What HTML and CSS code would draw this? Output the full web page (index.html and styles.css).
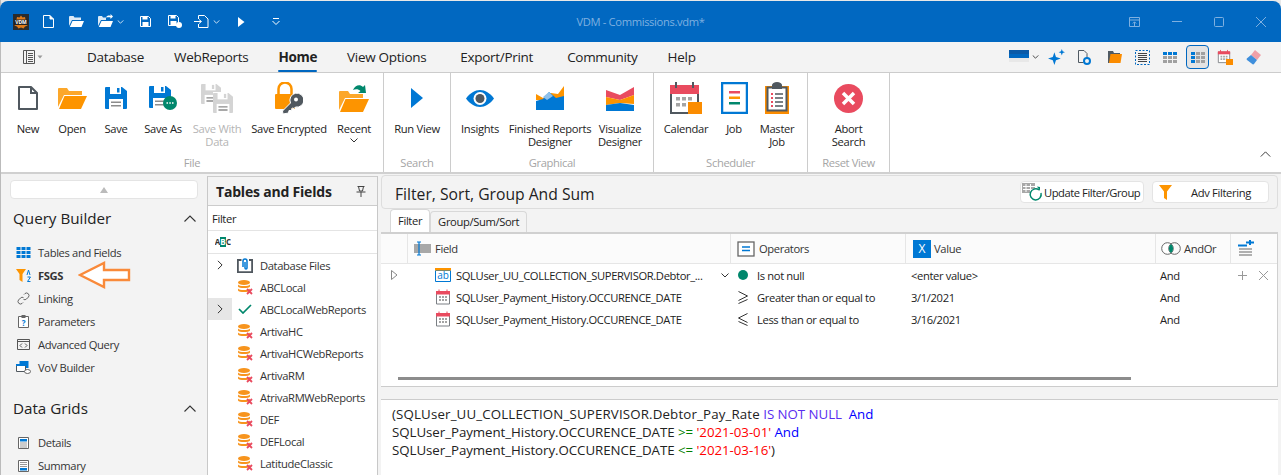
FILE: index.html
```html
<!DOCTYPE html>
<html lang="en">
<head>
  <meta charset="UTF-8">
  <meta name="viewport" content="width=device-width, initial-scale=1.0">
  <title>VDM - Commissions.vdm*</title>
  <link rel="stylesheet" href="styles.css">
</head>
<body>

<svg class="defs">
  <symbol id="db-x" viewBox="0 0 16 16">
    <ellipse cx="7" cy="3.5" rx="6" ry="2.5" fill="#f7941d"/>
    <path d="M1 5.5c1 2 11 2 12 0v2c-1 2-11 2-12 0zM1 9.5c1 2 11 2 12 0v2c-1 2-11 2-12 0z" fill="#f7941d"/>
    <path d="M10 10l5 5M15 10l-5 5" stroke="#e94b5f" stroke-width="1.8"/>
  </symbol>
  <symbol id="cal-small" viewBox="0 0 16 16">
    <path d="M1.5 3h13v12h-13z" fill="#fff" stroke="#7b7f84"/>
    <path d="M1 2h14v3.500H1z" fill="#e94b5f"/>
    <path d="M4 .5v3M12 .5v3" stroke="#e94b5f"/>
    <path d="M4 7h2v2H4zM7 7h2v2H7zM10 7h2v2h-2zM4 10h2v2H4zM7 10h2v2H7zM10 10h2v2h-2z" fill="#a4a4a4"/>
  </symbol>
  <symbol id="floppy" viewBox="0 0 22 22">
    <path d="M1 0h16l5 4v17a1 1 0 0 1-1 1H1a1 1 0 0 1-1-1V1a1 1 0 0 1 1-1z"/>
    <path d="M5 0h11v7H5z" fill="#fff"/>
    <path d="M12 1h2.500v4.500H12z"/>
    <path d="M4 12h14v10H4z" fill="#fff"/>
    <path d="M6 14.500h10V16H6zM6 18h10v1.500H6z" fill="#8c8c8c"/>
  </symbol>
  <symbol id="chev" viewBox="0 0 8 5">
    <path d="M.5.500L4 4 7.500.5" fill="none" stroke="currentColor"/>
  </symbol>
  <symbol id="chev-up" viewBox="0 0 12 7">
    <path d="M.5 6.500L6 1l5.500 5.500" fill="none" stroke="currentColor" stroke-width="1.100"/>
  </symbol>
  <symbol id="chev-right" viewBox="0 0 7 12">
    <path d="M1 1l5 5-5 5" fill="none" stroke="currentColor" stroke-width="1.200"/>
  </symbol>
  <symbol id="grid-tiles" viewBox="0 0 14 11">
    <path d="M0 0h4v3H0zM5 0h4v3H5zM10 0h4v3h-4zM0 4h4v3H0zM5 4h4v3H5zM10 4h4v3h-4zM0 8h4v3H0zM5 8h4v3H5zM10 8h4v3h-4z"/>
  </symbol>
</svg>

<div class="window">
  <header class="titlebar">
    <div class="qat">
      <svg class="logo" width="16" height="16" viewBox="0 0 16 16"><rect width="16" height="16" fill="#2b2b2b"/><path d="M8 1.500l1.500 2 2.500-.5.500 2.500 2 1.500-1 2 1 2.500-2.500 1-1.500 2-2.500-1-2.500 1-1.500-2-2.500-1 1-2.500-1-2 2-1.500.5-2.500 2.500.5z" fill="#e07b1a"/><rect x="1" y="5.500" width="14" height="5.500" fill="#222"/><text x="8" y="10.300" class="logo-text">VDM</text></svg>
      <svg class="q-new" width="11" height="13" viewBox="0 0 11 13"><path d="M.5.500h6.500l3.500 3.500v8.500H.5z" fill="none" stroke="#fff"/><path d="M7 .5V4h3.500" fill="#fff" stroke="#fff"/></svg>
      <svg class="q-open" width="15" height="11" viewBox="0 0 15 11"><path d="M0 1a1 1 0 0 1 1-1h3.500l1 1.500H12V4H3L0 10z" fill="#dbe9f6"/><path d="M3.500 5H15l-2.500 6H.8z" fill="#fff"/></svg>
      <svg class="q-open2" width="15" height="13" viewBox="0 0 15 13"><path d="M0 3a1 1 0 0 1 1-1h3l1 1.500h3V6H3l-3 6z" fill="#dbe9f6"/><path d="M3.500 7H15l-2.500 6H.8z" fill="#fff"/><path d="M8 3.500C9 1.500 11 1 12.500 2V0L15 2.500 12.500 5V3.500c-1.500-.5-3 0-4.500 0z" fill="#fff"/></svg>
      <svg class="q-chev" width="7" height="4"><use href="#chev"/></svg>
      <svg class="q-save" width="11" height="11" viewBox="0 0 11 11"><path d="M.5.500h8l2 2v8h-10z" fill="none" stroke="#fff"/><path d="M2.500 0h5v3.500h-5zM2.500 6h6v5h-6z" fill="#fff"/></svg>
      <svg class="q-saveas" width="14" height="13" viewBox="0 0 14 13"><path d="M.5.500h8l2 2v8h-10z" fill="none" stroke="#fff"/><path d="M2.500 0h5v3.500h-5zM2.500 6h6v5h-6z" fill="#fff"/><circle cx="11" cy="10" r="3" fill="#fff"/></svg>
      <svg class="q-import" width="15" height="13" viewBox="0 0 15 13"><path d="M4.500 4V.5h6L14 4v8.500H4.500V9" fill="none" stroke="#fff"/><path d="M0 6.500h7M5 4.500l2.500 2-2.500 2" fill="none" stroke="#fff"/></svg>
      <svg class="q-chev" width="7" height="4"><use href="#chev"/></svg>
      <svg class="q-run" width="7" height="10" viewBox="0 0 7 10"><path d="M0 0l6.500 5L0 10z" fill="#fff"/></svg>
      <svg class="q-more" width="8" height="7" viewBox="0 0 8 7"><path d="M1 .5h6M.5 3L4 6.500 7.500 3" fill="none" stroke="#fff"/></svg>
    </div>
    <div class="doc-title">VDM - Commissions.vdm*</div>
    <div class="win-btns">
      <svg width="11" height="10" viewBox="0 0 11 10"><path d="M.5.500h10v9H.5zM.5 3h10M5.500 9V5M3.800 6.500l1.700-1.700 1.700 1.700" fill="none" stroke="#7fb0e0"/></svg>
      <svg width="10" height="1" viewBox="0 0 10 1"><path d="M0 .5h10" stroke="#7fb0e0"/></svg>
      <svg width="10" height="10" viewBox="0 0 10 10"><rect x=".5" y=".5" width="9" height="9" rx="1" fill="none" stroke="#7fb0e0"/></svg>
      <svg width="10" height="10" viewBox="0 0 10 10"><path d="M0 0l10 10M10 0L0 10" stroke="#7fb0e0"/></svg>
    </div>
  </header>

  <nav class="tabbar">
    <svg class="tab-menu" width="20" height="14" viewBox="0 0 20 14"><path d="M.5.500h11v13H.5zM3.500.5v13M5 3.500h5M5 5.500h5M5 7.500h5M5 9.500h5M5 11.500h5" fill="none" stroke="#555"/><path d="M14.500 5.500h5L17 8.500z" fill="#999"/></svg>
    <div class="tabs">
      <span>Database</span>
      <span>WebReports</span>
      <span class="tab-on">Home</span>
      <span>View Options</span>
      <span class="tab-export">Export/Print</span>
      <span class="tab-comm">Community</span>
      <span>Help</span>
    </div>
    <div class="tab-tools">
      <span class="swatch"><i></i><i></i><i></i></span>
      <svg class="swatch-chev" width="7" height="4"><use href="#chev"/></svg>
      <svg class="t-spark" width="17" height="17" viewBox="0 0 16 16"><path d="M6 3l1.500 4.500L12 9l-4.500 1.500L6 15l-1.500-4.500L0 9l4.500-1.500zM13 0l.8 2.200L16 3l-2.200.8L13 6l-.8-2.200L10 3l2.200-.8z" fill="#0078d4"/></svg>
      <svg class="t-doc" width="13" height="15" viewBox="0 0 13 15"><path d="M.5.500h5.500l3 3v5M.5.500v12h5" fill="none" stroke="#505a63"/><circle cx="9" cy="11" r="3" fill="none" stroke="#0078d4" stroke-width="2"/></svg>
      <svg width="14" height="12" viewBox="0 0 14 12"><path d="M0 0h5l1 2h6v3H3L1.500 12H0z" fill="#505a63"/><path d="M2.500 3H14l-1.500 9H1z" fill="#fb8c00"/></svg>
      <svg width="15" height="15" viewBox="0 0 15 15"><rect x=".5" y=".5" width="14" height="14" fill="none" stroke="#0067c0" stroke-dasharray="2 1.500"/><path d="M3 3.500h9M3 5.500h9M3 7.500h9M3 9.500h9M3 11.500h9" stroke="#444"/></svg>
      <svg width="14" height="11" viewBox="0 0 14 11"><path d="M0 0h4v3H0zM5 0h4v3H5zM10 0h4v3h-4z" fill="#0078d4"/><path d="M0 4h4v3H0zM5 4h4v3H5zM10 4h4v3h-4zM0 8h4v3H0zM5 8h4v3H5zM10 8h4v3h-4z" fill="#a0a0a0"/></svg>
      <span class="tool-on"><svg width="14" height="11" viewBox="0 0 14 11"><path d="M5 0h4v3H5zM10 0h4v3h-4zM5 4h4v3H5zM10 4h4v3h-4zM5 8h4v3H5zM10 8h4v3h-4z" fill="#a0a0a0"/><path d="M0 0h4v3H0zM0 4h4v3H0zM0 8h4v3H0z" fill="#0078d4"/></svg></span>
      <svg width="16" height="16" viewBox="0 0 16 16"><use href="#cal-small" width="14" height="15"/><rect x="9" y="10" width="7" height="6" fill="#fb8c00"/></svg>
      <svg width="15" height="15" viewBox="0 0 15 15"><path d="M9 0l6 5-4 5-6-5z" fill="#f0a0a8"/><path d="M5 5l6 5-3 4a1 1 0 0 1-1.400.2L1 10a1 1 0 0 1-.2-1.400z" fill="#3f8fdc"/></svg>
    </div>
  </nav>

  <section class="ribbon">
    <div class="rgroup">
      <div class="ritems g-file">
        <div class="rbtn">
          <div class="ricon"><svg width="20" height="24" viewBox="0 0 20 24"><path d="M1 1h12l6 6v16H1z" fill="#fff" stroke="#50585f" stroke-width="2" stroke-linejoin="round"/><path d="M13 1v6h6" fill="none" stroke="#50585f" stroke-width="2"/></svg></div>
          <span>New</span>
        </div>
        <div class="rbtn">
          <div class="ricon"><svg width="29" height="21" viewBox="0 0 29 21"><path d="M1 0h8l2 3h13v4H6L0 19V1a1 1 0 0 1 1-1z" fill="#fca72a"/><path d="M6.500 8H29l-6 13H1z" fill="#fd9400"/></svg></div>
          <span>Open</span>
        </div>
        <div class="rbtn">
          <div class="ricon"><svg class="blue" width="22" height="22"><use href="#floppy"/></svg></div>
          <span>Save</span>
        </div>
        <div class="rbtn">
          <div class="ricon"><svg width="28" height="24" viewBox="0 0 28 24"><use href="#floppy" class="blue" width="22" height="22"/><circle cx="21" cy="17" r="7" fill="#00876c"/><path d="M17.500 17h1.500M20.300 17h1.500M23 17h1.500" stroke="#fff" stroke-width="1.500"/></svg></div>
          <span>Save As</span>
        </div>
        <div class="rbtn rbtn-off">
          <div class="ricon"><svg width="32" height="29" viewBox="0 0 32 29"><use href="#floppy" class="grey" width="20" height="20"/><rect x="12" y="8" width="20" height="21" fill="#fff"/><use href="#floppy" class="grey" x="12" y="9" width="20" height="20"/></svg></div>
          <span>Save With<br>Data</span>
        </div>
        <div class="rbtn">
          <div class="ricon"><svg width="28" height="33" viewBox="0 0 28 33"><path d="M3.500 14V7a6.500 6.500 0 0 1 13 0v6" fill="none" stroke="#fd9400" stroke-width="2.500"/><rect y="12" width="20" height="15" rx="1" fill="#fd9400"/><path d="M8 32l-.5-3 8-8a7 7 0 1 1 5 4l-1.500 1.500-2-.5-.5 2.500-2.500 0-.5 2.500z" fill="#50585f" stroke="#fff"/><circle cx="21" cy="17.500" r="2" fill="#fff"/></svg></div>
          <span>Save Encrypted</span>
        </div>
        <div class="rbtn">
          <div class="ricon"><svg width="30" height="28" viewBox="0 0 30 28"><path d="M1 7h8l2 3h13v4H6L0 26V8a1 1 0 0 1 1-1z" fill="#fca72a"/><path d="M6.500 15H30l-6 13H1z" fill="#fd9400"/><path d="M14 6c2-5 7-6 10-3l2-2 1 8h-8l2.500-2c-2-2-5-2-7.500-1z" fill="#00876c"/></svg></div>
          <span>Recent<br><svg class="rchev" width="8" height="5"><use href="#chev"/></svg></span>
        </div>
      </div>
      <div class="rlabel">File</div>
    </div>

    <div class="rgroup">
      <div class="ritems g-search">
        <div class="rbtn">
          <div class="ricon"><svg width="12" height="20" viewBox="0 0 12 20"><path d="M0 0l12 10L0 20z" fill="#0078d4"/></svg></div>
          <span>Run View</span>
        </div>
      </div>
      <div class="rlabel">Search</div>
    </div>

    <div class="rgroup">
      <div class="ritems g-graph">
        <div class="rbtn">
          <div class="ricon"><svg width="28" height="17" viewBox="0 0 28 17"><path d="M0 8.500C4 3 9 0 14 0s10 3 14 8.500C24 14 19 17 14 17S4 14 0 8.500z" fill="#0078d4"/><circle cx="14" cy="8.500" r="6.500" fill="#fff"/><circle cx="14" cy="8.500" r="4.500" fill="#50585f"/></svg></div>
          <span>Insights</span>
        </div>
        <div class="rbtn">
          <div class="ricon"><svg width="28" height="24" viewBox="0 0 28 24"><path d="M0 8l7 4 8-5 7 1 6-8v14H0z" fill="#fd9400"/><path d="M0 15l7-2 6-7 7 6 8-2v14H0z" fill="#0078d4"/><path d="M7 11l6-5 4 4-6 4z" fill="#8ec0ea"/></svg></div>
          <span>Finished Reports<br>Designer</span>
        </div>
        <div class="rbtn">
          <div class="ricon"><svg width="28" height="26" viewBox="0 0 28 26"><path d="M0 5l14 5 14-8v8L14 15 0 12z" fill="#e94b5f"/><path d="M0 12l14 3 14-5v9l-14-1-14 2z" fill="#fd9400"/><path d="M0 20l14-2 14 2v6H0z" fill="#0078d4"/></svg></div>
          <span>Visualize<br>Designer</span>
        </div>
      </div>
      <div class="rlabel">Graphical</div>
    </div>

    <div class="rgroup">
      <div class="ritems g-sched">
        <div class="rbtn">
          <div class="ricon"><svg width="32" height="32" viewBox="0 0 32 32"><path d="M1 4h27v27H1z" fill="#fff" stroke="#50585f" stroke-width="2"/><path d="M0 3h29v9H0z" fill="#e94b5f"/><path d="M6 0v6M23 0v6" stroke="#50585f" stroke-width="2"/><path d="M6 15h4v3.500H6zM12 15h4v3.500h-4zM18 15h4v3.500h-4zM6 21h4v3.500H6zM12 21h4v3.500h-4z" fill="#a4a4a4"/><rect x="18" y="20" width="14" height="12" fill="#fb8c00"/></svg></div>
          <span>Calendar</span>
        </div>
        <div class="rbtn">
          <div class="ricon"><svg width="27" height="32" viewBox="0 0 27 32"><rect x="1" y="1" width="25" height="30" fill="#fff" stroke="#0078d4" stroke-width="2.500"/><path d="M8 9h11v2.500H8z" fill="#e94b5f"/><path d="M8 14.500h11V17H8z" fill="#fd9400"/><path d="M8 20h11v2.500H8z" fill="#00876c"/></svg></div>
          <span>Job</span>
        </div>
        <div class="rbtn">
          <div class="ricon"><svg width="24" height="32" viewBox="0 0 24 32"><path d="M0 4h24v28H0z" fill="#fb8c00"/><path d="M2.500 5.500h19v23h-19z" fill="#fff" stroke="#50585f" stroke-width="2"/><path d="M7 3a5 3 0 0 1 10 0v4H7z" fill="#50585f"/><path d="M6 11h2v2H6zM6 15h2v2H6zM6 19h2v2H6zM6 23h2v2H6z" fill="#e94b5f"/><path d="M10 12h8M10 16h8M10 20h8M10 24h8" stroke="#50585f" stroke-width="1.500"/></svg></div>
          <span>Master<br>Job</span>
        </div>
      </div>
      <div class="rlabel">Scheduler</div>
    </div>

    <div class="rgroup">
      <div class="ritems g-reset">
        <div class="rbtn">
          <div class="ricon"><svg width="29" height="29" viewBox="0 0 29 29"><circle cx="14.500" cy="14.500" r="14.500" fill="#e94b5f"/><path d="M9 9l11 11M20 9L9 20" stroke="#fff" stroke-width="3.500"/></svg></div>
          <span>Abort<br>Search</span>
        </div>
      </div>
      <div class="rlabel">Reset View</div>
    </div>

    <svg class="ribbon-collapse" width="11" height="6"><use href="#chev-up"/></svg>
  </section>

  <main class="main">
    <aside class="sidenav">
      <div class="nav-scroll"><i></i></div>
      <div class="nav-head"><span>Query Builder</span><svg width="12" height="7"><use href="#chev-up"/></svg></div>
      <ul class="nav-list">
        <li><svg class="blue" width="14" height="11"><use href="#grid-tiles"/></svg>Tables and Fields</li>
        <li class="nav-on"><svg width="15" height="13" viewBox="0 0 15 13"><path d="M0 0h10L6.500 5v8L3.500 11V5z" fill="#fd9400"/><path d="M11 6l1.500-5 1.500 5M11.500 8h3l-3 4.500h3" fill="none" stroke="#0078d4"/></svg>FSGS
          <svg class="arrow" width="53" height="28" viewBox="0 0 53 28"><path d="M2 14L26 2v7h25v10H26v7z" fill="#fff" stroke="#f98a3a" stroke-width="2.400"/></svg>
        </li>
        <li><svg width="13" height="13" viewBox="0 0 13 13"><path d="M7 2.500l1-1a2.500 2.500 0 0 1 3.500 3.500L9.500 7a2.500 2.500 0 0 1-3 .4M6 10.500l-1 1A2.500 2.500 0 0 1 1.500 8L3.500 6a2.500 2.500 0 0 1 3-.4" fill="none" stroke="#666"/></svg>Linking</li>
        <li><svg width="11" height="13" viewBox="0 0 11 13"><path d="M.5 1.500h10v11H.5z" fill="#fff" stroke="#666"/><path d="M3.500 0h4v3h-4z" fill="#666"/><text x="5.500" y="10.500" class="svg-q">?</text></svg>Parameters</li>
        <li><svg width="13" height="11" viewBox="0 0 13 11"><path d="M.5.500h12v10H.5zM.5 2.500h12" fill="none" stroke="#555"/><path d="M5 4.500L3 6.500l2 2M8 4.500l2 2-2 2" fill="none" stroke="#555"/></svg>Advanced Query</li>
        <li><svg width="15" height="13" viewBox="0 0 15 13"><path d="M3.500 0h9v7h-9z" fill="#0078d4"/><path d="M.5 3.500h9v7h-9z" fill="#fff" stroke="#50585f"/><path d="M0 3h10v2H0z" fill="#0078d4"/><ellipse cx="11.500" cy="10.500" rx="3" ry="2" fill="#fff" stroke="#666"/></svg>VoV Builder</li>
      </ul>
      <div class="nav-head nav-head2"><span>Data Grids</span><svg width="12" height="7"><use href="#chev-up"/></svg></div>
      <ul class="nav-list nav-list2">
        <li><svg width="11" height="12" viewBox="0 0 11 12"><path d="M.5.500h10v11H.5z" fill="#fff" stroke="#666"/><path d="M2 2h7v2.500H2z" fill="#0078d4"/><path d="M2 6h7M2 8h7M2 10h7" stroke="#999"/></svg>Details</li>
        <li><svg width="11" height="12" viewBox="0 0 11 12"><path d="M.5.500h10v11H.5z" fill="#fff" stroke="#666"/><path d="M2 2.500h7M2 4.500h7M2 6.500h7" stroke="#999"/><path d="M2 8h7v2.500H2z" fill="#0078d4"/></svg>Summary</li>
      </ul>
    </aside>

    <section class="tables">
      <div class="tables-head">
        <span>Tables and Fields</span>
        <svg width="10" height="11" viewBox="0 0 10 11"><path d="M1.500.5h7M2.500.5l1 4.500h3l1-4.500M.5 6h9M5 6v5" fill="none" stroke="#444"/></svg>
      </div>
      <div class="tables-filter">Filter</div>
      <div class="tables-abc"><svg width="16" height="10" viewBox="0 0 16 10"><rect x="5" width="6" height="10" fill="#00876c"/><text x="2.500" y="8" class="abc">A</text><text x="8" y="8" class="abc abc-on">B</text><text x="13.500" y="8" class="abc">C</text></svg></div>
      <ul class="tree">
        <li><b class="tw"><svg width="6" height="10"><use href="#chev-right"/></svg></b><svg class="ti" width="16" height="15" viewBox="0 0 16 15"><path d="M4.500 2H.9v12.100h14.200V2H12" fill="none" stroke="#50585f" stroke-width="1.800"/><path d="M6 9V3a2 2 0 0 1 4 0v7a1 1 0 0 1-2 0V4" fill="none" stroke="#0078d4" stroke-width="1.500"/></svg><span>Database Files</span></li>
        <li><b class="tw"></b><svg class="ti" width="16" height="16"><use href="#db-x"/></svg><span>ABCLocal</span></li>
        <li><b class="tw tw-on"><svg width="6" height="10"><use href="#chev-right"/></svg></b><svg class="ti" width="13" height="10" viewBox="0 0 13 10"><path d="M.5 5l4 4 8-8" fill="none" stroke="#00876c" stroke-width="1.700"/></svg><span>ABCLocalWebReports</span></li>
        <li><b class="tw"></b><svg class="ti" width="16" height="16"><use href="#db-x"/></svg><span>ArtivaHC</span></li>
        <li><b class="tw"></b><svg class="ti" width="16" height="16"><use href="#db-x"/></svg><span>ArtivaHCWebReports</span></li>
        <li><b class="tw"></b><svg class="ti" width="16" height="16"><use href="#db-x"/></svg><span>ArtivaRM</span></li>
        <li><b class="tw"></b><svg class="ti" width="16" height="16"><use href="#db-x"/></svg><span>AtrivaRMWebReports</span></li>
        <li><b class="tw"></b><svg class="ti" width="16" height="16"><use href="#db-x"/></svg><span>DEF</span></li>
        <li><b class="tw"></b><svg class="ti" width="16" height="16"><use href="#db-x"/></svg><span>DEFLocal</span></li>
        <li><b class="tw"></b><svg class="ti" width="16" height="16"><use href="#db-x"/></svg><span>LatitudeClassic</span></li>
      </ul>
    </section>

    <section class="work">
      <div class="work-head">
        <h2>Filter, Sort, Group And Sum</h2>
        <button class="btn btn-update"><svg width="22" height="19" viewBox="0 0 22 19"><path d="M0 0h13v10H0z" fill="#a8a8a8"/><path d="M4 1v8M8.500 1v8M1 3.500h12M1 6.500h12" stroke="#fff"/><path d="M19 10a5.500 5.500 0 1 1-2-3" fill="#fff" stroke="#00876c" stroke-width="1.500"/><path d="M15 3.500l3 .5v4z" fill="#00876c"/></svg>Update Filter/Group</button>
        <button class="btn btn-adv"><svg width="13" height="15" viewBox="0 0 13 15"><path d="M0 0h13L8 6.500V15l-3-2V6.500z" fill="#fd9400"/></svg><span>Adv Filtering</span></button>
      </div>
      <div class="subtabs">
        <span class="subtab subtab-on">Filter</span>
        <span class="subtab">Group/Sum/Sort</span>
      </div>
      <div class="grid-box">
        <div class="grid">
          <div class="gh gh-ind"></div>
          <div class="gh gh-field"><svg width="17" height="15" viewBox="0 0 17 15"><rect y="3" width="17" height="9" fill="#a8a8a8"/><path d="M3 1h4M3 14h4M5 1v13" fill="none" stroke="#0078d4" stroke-width="1.200"/></svg>Field</div>
          <div class="gh gh-op"><svg width="18" height="16" viewBox="0 0 18 16"><rect x="1" y="1" width="16" height="14" fill="#fff" stroke="#666" stroke-width="1.300"/><path d="M5 6h8M5 9.500h8" stroke="#0078d4" stroke-width="1.300"/></svg>Operators</div>
          <div class="gh gh-val"><svg width="18" height="18" viewBox="0 0 18 18"><rect width="18" height="18" fill="#0078d4"/><text x="9" y="13" class="svg-x">X</text></svg>Value</div>
          <div class="gh gh-and"><svg width="20" height="13" viewBox="0 0 20 13"><circle cx="6.500" cy="6.500" r="5.800" fill="#fff" stroke="#666"/><circle cx="13.500" cy="6.500" r="5.800" fill="none" stroke="#666"/><path d="M10 2a5.800 5.800 0 0 1 0 9 5.800 5.800 0 0 1 0-9z" fill="#00876c"/></svg>AndOr</div>
          <div class="gh gh-add"><svg width="16" height="17" viewBox="0 0 16 17"><path d="M8 2.500h8M12 0v5" stroke="#0078d4" stroke-width="2"/><path d="M0 5.500h9" stroke="#0078d4" stroke-width="2"/><path d="M1 9h13M1 12h13M1 15h13" stroke="#666" stroke-width="1.200"/></svg></div>

          <div class="gc gc-ind"><svg width="7" height="10" viewBox="0 0 7 10"><path d="M.5.500l5.500 4.500-5.500 4.500z" fill="none" stroke="#888"/></svg></div>
          <div class="gc gc-field"><svg width="16" height="14" viewBox="0 0 16 14"><path d="M.5 2.500h15v11H.5z" fill="#fff" stroke="#0078d4"/><path d="M0 0h16v2.500H0z" fill="#fd9400"/><text x="8" y="11" class="svg-ab">ab</text></svg><span class="field-name">SQLUser_UU_COLLECTION_SUPERVISOR.Debtor_...</span><svg class="field-chev" width="8" height="5"><use href="#chev"/></svg></div>
          <div class="gc"><svg class="op" width="10" height="10" viewBox="0 0 10 10"><circle cx="5" cy="5" r="5" fill="#00876c"/></svg>Is not null</div>
          <div class="gc gc-val">&lt;enter value&gt;</div>
          <div class="gc gc-and">And</div>
          <div class="gc gc-acts"><svg width="9" height="9" viewBox="0 0 9 9"><path d="M4.500 0v9M0 4.500h9" stroke="#999"/></svg><svg width="9" height="9" viewBox="0 0 9 9"><path d="M0 0l9 9M9 0L0 9" stroke="#999"/></svg></div>

          <div class="gc gc-ind"></div>
          <div class="gc gc-field"><svg width="16" height="16"><use href="#cal-small"/></svg><span class="field-name">SQLUser_Payment_History.OCCURENCE_DATE</span></div>
          <div class="gc"><svg class="op" width="10" height="13" viewBox="0 0 10 13"><path d="M.5.500L9.500 5 .5 9.500M.5 12.500l9-4" fill="none" stroke="#333"/></svg>Greater than or equal to</div>
          <div class="gc gc-val">3/1/2021</div>
          <div class="gc gc-and">And</div>
          <div class="gc gc-acts"></div>

          <div class="gc gc-ind"></div>
          <div class="gc gc-field"><svg width="16" height="16"><use href="#cal-small"/></svg><span class="field-name">SQLUser_Payment_History.OCCURENCE_DATE</span></div>
          <div class="gc"><svg class="op" width="10" height="13" viewBox="0 0 10 13"><path d="M9.500.500L.5 5l9 4.500M9.500 12.500l-9-4" fill="none" stroke="#333"/></svg>Less than or equal to</div>
          <div class="gc gc-val">3/16/2021</div>
          <div class="gc gc-and">And</div>
          <div class="gc gc-acts"></div>
        </div>
        <div class="hscroll"><i></i></div>
      </div>
      <div class="sql">
        <div><span class="sql-wide">(SQLUser_UU_COLLECTION_SUPERVISOR.Debtor_Pay_Rate</span> <span class="kw-a">IS NOT NULL</span>&nbsp; <span class="kw">And</span></div>
        <div>SQLUser_Payment_History.OCCURENCE_DATE <span class="op-g">&gt;=</span> <span class="str">'2021-03-01'</span> <span class="kw">And</span></div>
        <div>SQLUser_Payment_History.OCCURENCE_DATE <span class="op-g">&lt;=</span> <span class="str">'2021-03-16'</span>)</div>
      </div>
    </section>
  </main>
</div>

</body>
</html>
```

FILE: styles.css
```css
* {
  margin: 0;
  padding: 0;
  box-sizing: border-box;
}
html, body {
  height: 475px;
  overflow: hidden;
}
body {
  font-family: "Open Sans", "Liberation Sans", sans-serif;
  font-size: 11.2px;
  letter-spacing: -0.36px;
  color: #222;
  background-color: #e8e8e8;
}
svg { display: block; flex: none; }
.defs { display: none; }
.blue { fill: #0078d4; }
.grey { fill: #d4d4d4; }
.window {
  height: 475px;
  padding-top: 1px;
  display: flex;
  flex-direction: column;
  border-left: 1px solid #bbb;
}

/* title bar */
.titlebar {
  position: relative;
  height: 41px;
  flex: none;
  display: flex;
  align-items: center;
  background-color: #0168c1;
  border-radius: 8px 8px 0 0;
  margin-left: -1px;
}
.qat {
  display: flex;
  align-items: center;
  padding-left: 13px;
  color: #fff;
}
.logo-text {
  font-size: 5px;
  font-weight: 700;
  fill: #fff;
  text-anchor: middle;
  letter-spacing: 0;
}
.q-new { margin-left: 14px; }
.q-open { margin-left: 15px; }
.q-open2 { margin-left: 14px; margin-bottom: 2px; }
.q-chev { margin-left: 4px; }
.q-save { margin-left: 16px; }
.q-saveas { margin-left: 17px; }
.q-import { margin-left: 12px; }
.q-run { margin-left: 18px; }
.q-more { margin-left: 27px; }
.doc-title {
  position: absolute;
  left: 0;
  right: 0;
  text-align: center;
  color: #7fb0e0;
}
.win-btns {
  margin-left: auto;
  width: 160px;
  padding: 0 15px 0 8px;
  display: flex;
  justify-content: space-between;
  align-items: center;
}

/* tabs */
.tabbar {
  height: 31px;
  flex: none;
  display: flex;
  align-items: center;
  background-color: #f3f3f3;
  border-bottom: 1px solid #ccc;
}
.tab-menu { margin-left: 22px; }
.tabs {
  display: flex;
  gap: 30px;
  margin-left: 44px;
  font-size: 13.5px;
  letter-spacing: -0.3px;
}
.tabs span {
  position: relative;
  line-height: 30px;
}
.tabs .tab-export { margin-left: 4px; }
.tabs .tab-comm { margin-left: 4px; }
.tab-on { font-weight: 700; }
.tab-on::after {
  content: "";
  position: absolute;
  left: 0;
  right: 0;
  bottom: 0;
  height: 2px;
  background-color: #0067c0;
  border-radius: 2px;
}
.tab-tools {
  margin-left: auto;
  padding-right: 20px;
  display: flex;
  align-items: center;
  gap: 13px;
}
.swatch {
  width: 20px;
  display: flex;
  flex-direction: column;
  margin-bottom: 3px;
}
.swatch i { height: 4px; background-color: #0067c0; }
.swatch i:nth-child(1) { background-color: #0a5aa8; }
.swatch i:nth-child(3) { background-color: #e8e8e8; }
.swatch-chev { margin-left: -10px; margin-right: -4px; color: #222; }
.t-doc { margin-right: 4px; }
.tool-on {
  width: 23px;
  height: 24px;
  margin: 0 -5px 0 -4px;
  display: flex;
  align-items: center;
  justify-content: center;
  background-color: #e3e3e3;
  border: 1px solid #0067c0;
  border-radius: 4px;
}

/* ribbon */
.ribbon {
  position: relative;
  height: 101px;
  flex: none;
  display: flex;
  background-color: #fff;
  border-bottom: 2px solid #d0d0d0;
}
.rgroup {
  display: flex;
  flex-direction: column;
  border-right: 1px solid #ccc;
}
.ritems {
  flex: 1;
  display: grid;
  padding-top: 7px;
}
.g-file { grid-template-columns: 44px 44px 44px 50px 58px 86px 44px; padding: 7px 7px 0 5px; }
.g-search { grid-template-columns: 66px; }
.g-graph { grid-template-columns: 52px 88px 52px; padding: 7px 7px 0 3px; }
.g-sched { grid-template-columns: 52px 44px 42px; padding: 7px 9px 0 6px; }
.g-reset { grid-template-columns: 81px; }
.rbtn {
  display: flex;
  flex-direction: column;
  align-items: center;
  text-align: center;
  line-height: 13px;
  white-space: nowrap;
  letter-spacing: -0.3px;
}
.rbtn-off { color: #b5b5b5; }
.ricon {
  height: 36px;
  margin-bottom: 6px;
  display: flex;
  align-items: center;
  justify-content: center;
}
.rchev { margin: 3px auto 0; color: #333; }
.rlabel {
  height: 17px;
  text-align: center;
  color: #a5a5a5;
  line-height: 16px;
}
.ribbon-collapse {
  position: absolute;
  right: 10px;
  bottom: 15px;
  color: #333;
}

/* main area */
.main {
  flex: 1;
  min-height: 0;
  display: flex;
  background-color: #f3f3f3;
  overflow: hidden;
}

/* left navigation */
.sidenav {
  width: 206px;
  flex: none;
  padding: 6px 9px 0 9px;
}
.nav-scroll {
  height: 19px;
  display: flex;
  align-items: center;
  justify-content: center;
  background-color: #fff;
  border: 1px solid #e4e4e4;
  border-radius: 4px;
}
.nav-scroll i {
  border-left: 4px solid transparent;
  border-right: 4px solid transparent;
  border-bottom: 6px solid #bbb;
}
.nav-head {
  height: 36px;
  margin-top: 1px;
  padding-left: 3px;
  display: flex;
  align-items: center;
  justify-content: space-between;
  font-size: 15.2px;
  letter-spacing: 0;
}
.nav-head svg { margin-right: 2px; color: #333; }
.nav-head2 { margin-top: 9px; height: 40px; }
.nav-list {
  list-style: none;
  margin-top: 5px;
}
.nav-list2 { margin-top: 3px; }
.nav-list li {
  position: relative;
  height: 23px;
  display: flex;
  align-items: center;
  gap: 7px;
  padding-left: 6px;
  color: #333;
}
.nav-list li > svg:first-child { width: 15px; }
.nav-on { font-weight: 700; }
.arrow {
  position: absolute;
  left: 68px;
  top: -3px;
}
.svg-q {
  font-size: 8px;
  font-weight: 700;
  fill: #0078d4;
  text-anchor: middle;
}

/* tables panel */
.tables {
  width: 171px;
  flex: none;
  margin-top: 2px;
  background-color: #fff;
  border-left: 1px solid #c8c8c8;
  border-right: 1px solid #c8c8c8;
}
.tables-head {
  height: 30px;
  display: flex;
  align-items: center;
  justify-content: space-between;
  padding: 0 11px 0 8px;
  background-color: #f3f3f3;
  border-top: 1px solid #ccc;
  border-bottom: 1px solid #ccc;
  font-size: 14px;
  font-weight: 700;
  letter-spacing: -0.2px;
}
.tables-filter {
  height: 25px;
  line-height: 26px;
  padding-left: 4px;
  border-bottom: 1px solid #e4e4e4;
}
.tables-abc {
  height: 23px;
  padding: 6px 0 0 7px;
  border-bottom: 1px solid #e4e4e4;
}
.abc {
  font-size: 8px;
  font-weight: 700;
  fill: #333;
  text-anchor: middle;
  letter-spacing: 0;
}
.abc-on { fill: #fff; }
.tree {
  list-style: none;
}
.tree li {
  height: 22px;
  display: flex;
  align-items: center;
  color: #333;
}
.tw {
  width: 24px;
  height: 22px;
  flex: none;
  display: flex;
  align-items: center;
  justify-content: center;
  color: #333;
}
.tw-on { background-color: #e6e6e6; }
.ti {
  width: 16px;
  margin: 0 7px 0 5px;
}

/* filter area */
.work {
  flex: 1;
  min-width: 0;
  display: flex;
  flex-direction: column;
  padding: 1px 3px 0 3px;
}
.work-head {
  height: 34px;
  flex: none;
  display: flex;
  align-items: center;
  padding: 0 8px 0 13px;
  border: 1px solid #ddd;
  border-radius: 4px;
}
.work-head h2 {
  flex: 1;
  padding-top: 3px;
  font-size: 15.7px;
  font-weight: 400;
  letter-spacing: 0;
}
.btn {
  height: 22px;
  display: flex;
  align-items: center;
  background-color: #fff;
  border: 1px solid #e4e4e4;
  border-radius: 4px;
  font: inherit;
  letter-spacing: inherit;
  color: #222;
  white-space: nowrap;
}
.btn-update {
  width: 124px;
  margin-right: 8px;
  padding-left: 1px;
  letter-spacing: -0.45px;
}
.btn-adv {
  width: 117px;
  padding-left: 6px;
}
.btn-adv span {
  flex: 1;
  text-align: center;
  padding-left: 2px;
}
.subtabs {
  height: 23px;
  flex: none;
  display: flex;
  align-items: flex-end;
  padding-left: 9px;
}
.subtab {
  height: 21px;
  line-height: 20px;
  padding: 0 7px;
  background-color: #f3f3f3;
  border: 1px solid #d8d8d8;
  border-bottom: none;
  border-radius: 4px 4px 0 0;
}
.subtab-on {
  height: 23px;
  background-color: #fff;
  line-height: 22px;
}
.grid-box {
  height: 155px;
  flex: none;
  display: flex;
  flex-direction: column;
  background-color: #fff;
  border-top: 2px solid #d0d0d0;
  border-bottom: 1px solid #ccc;
  border-right: 1px solid #d0d0d0;
}
.grid {
  flex: 1;
  display: grid;
  grid-template-columns: 27px 323px 175px 250px 75px 1fr;
  grid-template-rows: 30px 22px 22px 22px 1fr;
  align-content: start;
}
.gh {
  display: flex;
  align-items: center;
  gap: 4px;
  padding-left: 7px;
  background-color: #fbfbfb;
  border-right: 1px solid #e6e6e6;
  border-bottom: 1px solid #e6e6e6;
  color: #333;
}
.gh-ind { padding: 0; }
.gh-field { padding-left: 6px; }
.gh-op { padding-left: 6px; gap: 4px; }
.gh-val { gap: 3px; }
.gh-and { padding-left: 5px; gap: 3px; }
.gh-add { padding-left: 7px; border-right: none; }
.gc {
  display: flex;
  align-items: center;
  color: #222;
}
.gc-ind { padding-left: 10px; }
.gc-field { padding-left: 27px; gap: 5px; }
.field-name { width: 252px; white-space: nowrap; }
.field-chev { margin-left: 8px; color: #333; }
.op { margin: 0 9px 0 7px; }
.gc-val { padding-left: 5px; }
.gc-and { padding-left: 4px; }
.gc-acts {
  padding-left: 7px;
  gap: 12px;
}
.hscroll {
  height: 16px;
  padding: 7px 0 0 17px;
}
.hscroll i {
  display: block;
  width: 733px;
  height: 3px;
  background-color: #8c8c8c;
}
.sql {
  flex: 1;
  margin-top: 12px;
  padding: 5px 12px 5px 11px;
  background-color: #fff;
  border-top: 1px solid #ccc;
  font-size: 13.3px;
  letter-spacing: -0.05px;
  line-height: 18px;
  color: #222;
  white-space: nowrap;
}
.sql-wide { letter-spacing: 0.15px; }
.kw { color: #0000ff; }
.kw-a { color: #5a2df0; }
.op-g { color: #008000; }
.str { color: #ff0000; }
.svg-x {
  font-size: 12px;
  fill: #fff;
  text-anchor: middle;
  letter-spacing: 0;
}
.svg-ab {
  font-size: 10px;
  fill: #0078d4;
  text-anchor: middle;
  letter-spacing: 0;
}
```
